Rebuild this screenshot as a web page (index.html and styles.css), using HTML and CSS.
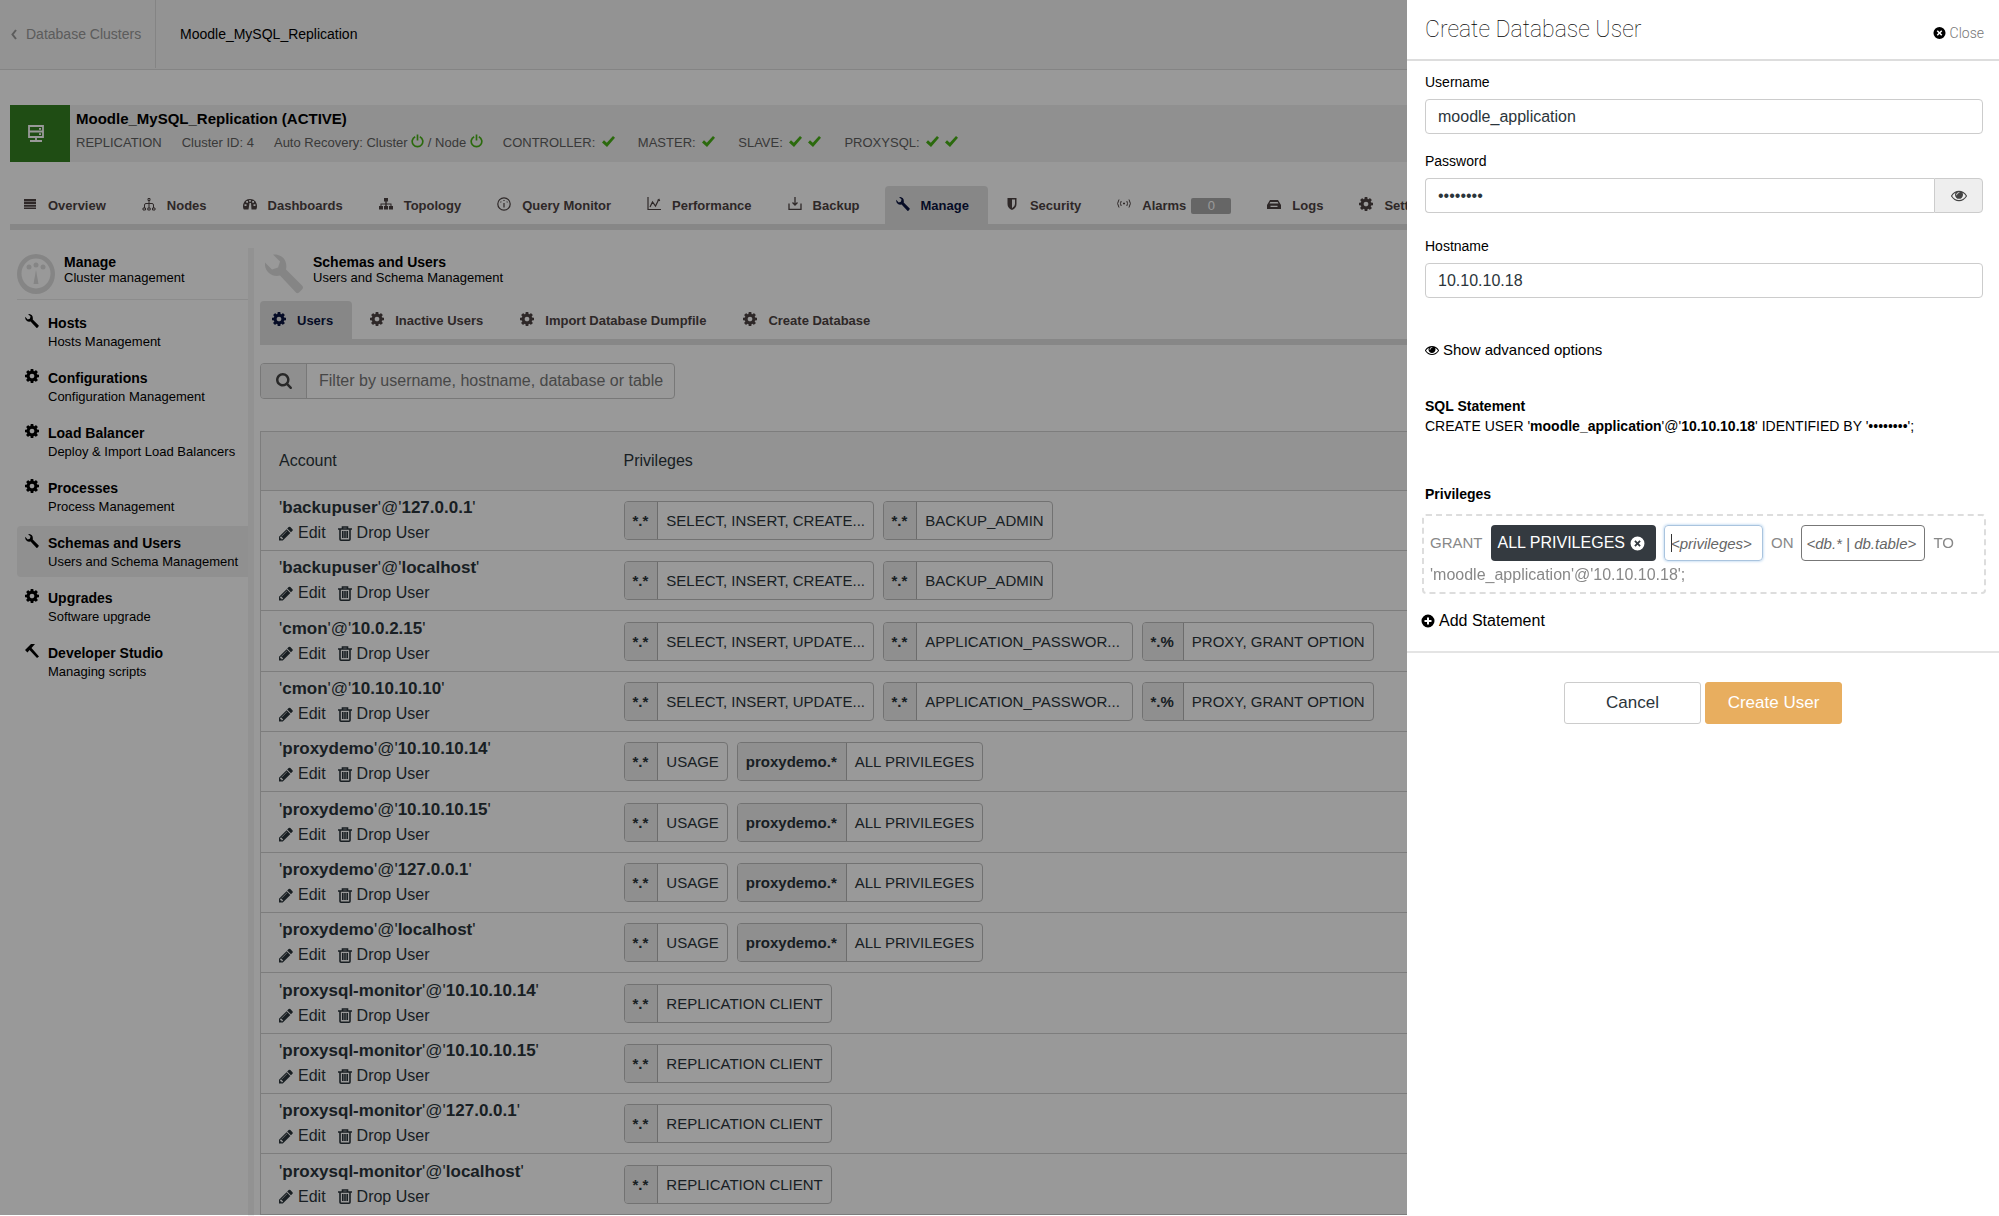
FILE: index.html
```html
<!DOCTYPE html>
<html lang="en">
<head>
<meta charset="utf-8">
<title>Moodle_MySQL_Replication</title>
<link rel="stylesheet" href="styles.css">
</head>
<body>
<svg class="sprite" aria-hidden="true">
  <symbol id="cog" viewBox="128 128 1536 1536"><path d="M1152 896q0-106-75-181t-181-75-181 75-75 181 75 181 181 75 181-75 75-181zm512-109v222q0 12-8 23t-20 13l-185 28q-19 54-39 91 35 50 107 138 10 12 10 25t-9 23q-27 37-99 108t-94 71q-12 0-26-9l-138-108q-44 23-91 38-16 136-29 186-7 28-36 28h-222q-14 0-24.5-8.5t-11.5-21.5l-28-184q-49-16-90-37l-141 107q-10 9-25 9-14 0-25-11-126-114-165-168-7-10-7-23 0-12 8-23 15-21 51-66.5t54-70.5q-27-50-41-99l-183-27q-13-2-21-12.5t-8-23.5v-222q0-12 8-23t19-13l186-28q14-46 39-92-40-57-107-138-10-12-10-24 0-10 9-23 26-36 98.5-107.5t94.5-71.5q13 0 26 10l138 107q44-23 91-38 16-136 29-186 7-28 36-28h222q14 0 24.5 8.5t11.5 21.5l28 184q49 16 90 37l142-107q9-9 24-9 13 0 25 10 129 119 165 170 7 8 7 22 0 12-8 23-15 21-51 66.5t-54 70.5q26 50 41 98l183 28q13 2 21 12.5t8 23.5z"/></symbol>
  <symbol id="wrench" viewBox="0 0 38 39"><path d="M8 0C17-1 23 6 21 15L37 31Q39 33 37 35L34 38Q32 40 30 37L15 21C7 23-1 17 0 8L7 15L13 13L15 7Z"/></symbol>
  <symbol id="hammer" viewBox="0 0 14 14"><path d="M0 6L6 0H10L6.5 4L14 12.500L12 14L4.500 6L2.500 8.500Z"/></symbol>
  <symbol id="eye" viewBox="0 384 1792 1152"><path d="M1664 960q-152-236-381-353 61 104 61 225 0 185-131.500 316.500t-316.500 131.500-316.500-131.500-131.500-316.500q0-121 61-225-229 117-381 353 133 205 333.500 326.500t434.500 121.500 434.500-121.500 333.500-326.500zm-720-384q0-20-14-34t-34-14q-125 0-214.500 89.500t-89.500 214.500q0 20 14 34t34 14 34-14 14-34q0-86 61-147t147-61q20 0 34-14t14-34zm848 384q0 34-20 69-140 230-376.500 368.500t-499.500 138.500-499.500-139-376.500-368q-20-35-20-69t20-69q140-229 376.500-368t499.500-139 499.500 139 376.500 368q20 35 20 69z"/></symbol>
  <symbol id="pencil" viewBox="128 128 1536 1536"><path d="M491 1536l91-91-235-235-91 91v107h128v128h107zm523-928q0-22-22-22-10 0-17 7l-542 542q-7 7-7 17 0 22 22 22 10 0 17-7l542-542q7-7 7-17zm-54-192l416 416-832 832h-416v-416zm683 96q0 53-37 90l-166 166-416-416 166-165q36-38 90-38 53 0 91 38l235 234q37 39 37 91z"/></symbol>
  <symbol id="trash" viewBox="0 0 14 15"><path fill="none" stroke="currentColor" stroke-width="1.600" d="M0 3H14M4.500 3V1H9.500V3M2 3V13.300Q2 14.200 3 14.200H11Q12 14.200 12 13.300V3M4.800 5V12M7 5V12M9.200 5V12"/></symbol>
  <symbol id="search" viewBox="64 128 1664 1664"><path d="M1216 832q0-185-131.500-316.500t-316.500-131.500-316.500 131.500-131.500 316.500 131.500 316.500 316.500 131.500 316.500-131.500 131.500-316.500zm512 832q0 52-38 90t-90 38q-54 0-90-38l-343-342q-179 124-399 124-143 0-273.500-55.500t-225-150-150-225-55.500-273.500 55.500-273.500 150-225 225-150 273.500-55.500 273.500 55.500 225 150 150 225 55.500 273.500q0 220-124 399l343 343q37 37 37 90z"/></symbol>
  <symbol id="check" viewBox="0 0 13 11"><path d="M0 6.500L2 4.300L4.800 6.800L11 0L13 1.800L5 11Z"/></symbol>
  <symbol id="power" viewBox="0 0 14 14"><path fill="none" stroke="currentColor" stroke-width="1.800" d="M4.500 2.300A5.700 5.700 0 1 0 9.500 2.300M7 0V6.500"/></symbol>
  <symbol id="bars" viewBox="0 0 14 12"><path d="M1 1H13V3.500H1ZM1 4H13V6H1ZM1 6.700H13V8.700H1ZM1 9.400H13V11H1Z"/></symbol>
  <symbol id="nodes" viewBox="0 0 14 14"><path fill="none" stroke="currentColor" d="M7 3.500V11M2.500 11V8Q2.500 6.500 4 6.500H10Q11.500 6.500 11.500 8V11M6 1.500H8V3.500H6ZM1 11H3.500V13H1ZM5.800 11H8.200V13H5.800ZM10.500 11H13V13H10.500Z"/></symbol>
  <symbol id="dash" viewBox="0 0 14 14"><path fill-rule="evenodd" d="M.8 12.500Q-.5 10.500 .3 7Q2 2 7 2T13.700 7Q14.500 10.500 13.200 12.500H8.500L8 6L6.500 6L5.500 12.500ZM1.500 9H3.500V7.200H1.500ZM3.200 5.800H5V4H3.200ZM6.200 4.700H7.800V3H6.200ZM9.200 5.800H11V4H9.200ZM10.500 9H12.500V7.200H10.500Z"/></symbol>
  <symbol id="sitemap" viewBox="0 0 14 14"><path d="M5 1H9V4.500H7.700V6.500H12.500V9H14V12.500H10V9H11.500V7.500H7.700V9H9V12.500H5V9H6.300V7.500H2.500V9H4V12.500H0V9H1.500V6.500H6.300V4.500H5Z"/></symbol>
  <symbol id="info" viewBox="0 0 14 14"><path fill="none" stroke="currentColor" stroke-width="1.200" d="M7 .8A6.200 6.200 0 1 0 7 13.200A6.200 6.200 0 1 0 7 .8M7 6V10.500M6.400 3.500H7.600M3.500 4.800L4.300 5.300M10.500 4.800L9.700 5.300"/></symbol>
  <symbol id="chart" viewBox="0 0 14 14"><path fill="none" stroke="currentColor" stroke-width="1.200" d="M1 0V12.500H14M3 10L5.500 5L8.500 9L11.500 3M10.500 3.500L12 2.500L12.700 4"/></symbol>
  <symbol id="backup" viewBox="0 0 14 14"><path fill="none" stroke="currentColor" stroke-width="1.300" d="M1 6.500V12.300H13V6.500M7 0V8M4.500 5.500L7 8L9.500 5.500"/></symbol>
  <symbol id="shield" viewBox="0 0 14 14"><path fill-rule="evenodd" d="M2.500 1H11.500V7Q11.500 11 7 13Q2.500 11 2.500 7ZM7 2.500V11.300Q10 9.500 10 7V2.500Z"/></symbol>
  <symbol id="signal" viewBox="0 0 14 14"><path fill="none" stroke="currentColor" d="M2 2.500Q-.8 6.500 2 10.500M4.200 4Q2.800 6.500 4.200 9M9.800 4Q11.200 6.500 9.800 9M12 2.500Q14.800 6.500 12 10.500M7 5.500V7.500M6 6.500H8"/></symbol>
  <symbol id="drive" viewBox="0 0 14 14"><path fill-rule="evenodd" d="M0 8L3 3H11L14 8V12H0ZM2.500 6.500H11.500L10.700 5H3.300ZM3.500 8.800V10H10.500V8.800Z"/></symbol>
  <symbol id="xcircle" viewBox="0 0 14 14"><path fill-rule="evenodd" d="M7 .5A6.500 6.500 0 1 1 7 13.500A6.500 6.500 0 1 1 7 .5M4 5.200L5.800 7L4 8.800L5.200 10L7 8.200L8.800 10L10 8.800L8.200 7L10 5.200L8.800 4L7 5.800L5.200 4Z"/></symbol>
  <symbol id="pluscircle" viewBox="0 0 14 14"><path fill-rule="evenodd" d="M7 .5A6.500 6.500 0 1 1 7 13.500A6.500 6.500 0 1 1 7 .5M6 3.500V6H3.500V8H6V10.500H8V8H10.500V6H8V3.500Z"/></symbol>
  <symbol id="server" viewBox="0 0 18 18"><path fill="none" stroke="currentColor" stroke-width="1.800" d="M2 1H16V12H2ZM2 6.500H16M9 12V15.500M3 16H15M12 3.800H14M12 9.200H14"/></symbol>
  <symbol id="gauge" viewBox="0 0 38 40"><path fill-rule="evenodd" d="M19 0A19 20 0 1 1 19 40A19 20 0 1 1 19 0M19 4.500A14.500 15 0 1 0 19 34.500A14.500 15 0 1 0 19 4.500"/><circle cx="12" cy="13" r="2.500"/><circle cx="19" cy="11" r="2.500"/><circle cx="26" cy="13" r="2.500"/><path d="M19 16L21.500 30H16.500Z"/></symbol>
  <symbol id="chevron" viewBox="0 0 6 11"><path fill="none" stroke="currentColor" stroke-width="2" d="M5 1L1.500 5.500L5 10"/></symbol>
</svg>

<div class="page">
  <header class="topbar">
    <a class="crumb" href="#"><svg class="ico-chev"><use href="#chevron"/></svg>Database Clusters</a>
    <span class="current">Moodle_MySQL_Replication</span>
  </header>

  <section class="cluster">
    <div class="cluster-icon"><svg><use href="#server"/></svg></div>
    <div class="cluster-text">
      <h1>Moodle_MySQL_Replication (ACTIVE)</h1>
      <div class="meta">
        <span>REPLICATION</span>
        <span>Cluster ID: 4</span>
        <span>Auto Recovery: Cluster <svg class="power"><use href="#power"/></svg> / Node <svg class="power"><use href="#power"/></svg></span>
        <span>CONTROLLER: <svg class="check"><use href="#check"/></svg></span>
        <span>MASTER: <svg class="check"><use href="#check"/></svg></span>
        <span>SLAVE: <svg class="check"><use href="#check"/></svg><svg class="check"><use href="#check"/></svg></span>
        <span>PROXYSQL: <svg class="check"><use href="#check"/></svg><svg class="check"><use href="#check"/></svg></span>
      </div>
    </div>
  </section>

  <nav class="tabs main-tabs">
    <a href="#"><svg><use href="#bars"/></svg>Overview</a>
    <a href="#"><svg><use href="#nodes"/></svg>Nodes</a>
    <a href="#"><svg><use href="#dash"/></svg>Dashboards</a>
    <a href="#"><svg><use href="#sitemap"/></svg>Topology</a>
    <a href="#"><svg><use href="#info"/></svg>Query Monitor</a>
    <a href="#"><svg><use href="#chart"/></svg>Performance</a>
    <a href="#"><svg><use href="#backup"/></svg>Backup</a>
    <a href="#" class="active"><svg><use href="#wrench"/></svg>Manage</a>
    <a href="#"><svg><use href="#shield"/></svg>Security</a>
    <a href="#"><svg><use href="#signal"/></svg>Alarms<span class="badge">0</span></a>
    <a href="#"><svg><use href="#drive"/></svg>Logs</a>
    <a href="#"><svg><use href="#cog"/></svg>Settings</a>
  </nav>

  <div class="body">
    <aside class="sidebar">
      <div class="section-head side-head"><svg><use href="#gauge"/></svg><div><h2>Manage</h2><p>Cluster management</p></div></div>
      <nav class="side-nav">
        <a href="#"><svg><use href="#wrench"/></svg><span><b>Hosts</b><small>Hosts Management</small></span></a>
        <a href="#"><svg><use href="#cog"/></svg><span><b>Configurations</b><small>Configuration Management</small></span></a>
        <a href="#"><svg><use href="#cog"/></svg><span><b>Load Balancer</b><small>Deploy &amp; Import Load Balancers</small></span></a>
        <a href="#"><svg><use href="#cog"/></svg><span><b>Processes</b><small>Process Management</small></span></a>
        <a href="#" class="active"><svg><use href="#wrench"/></svg><span><b>Schemas and Users</b><small>Users and Schema Management</small></span></a>
        <a href="#"><svg><use href="#cog"/></svg><span><b>Upgrades</b><small>Software upgrade</small></span></a>
        <a href="#"><svg><use href="#hammer"/></svg><span><b>Developer Studio</b><small>Managing scripts</small></span></a>
      </nav>
    </aside>

    <main class="content">
      <div class="section-head"><svg><use href="#wrench"/></svg><div><h2>Schemas and Users</h2><p>Users and Schema Management</p></div></div>
      <nav class="tabs sub-tabs">
        <a href="#" class="active"><svg><use href="#cog"/></svg>Users</a>
        <a href="#"><svg><use href="#cog"/></svg>Inactive Users</a>
        <a href="#"><svg><use href="#cog"/></svg>Import Database Dumpfile</a>
        <a href="#"><svg><use href="#cog"/></svg>Create Database</a>
      </nav>
      <div class="filter">
        <label for="filter" aria-label="Filter"><svg><use href="#search"/></svg></label>
        <input id="filter" type="text" placeholder="Filter by username, hostname, database or table">
      </div>

      <table class="users">
        <thead><tr><th>Account</th><th>Privileges</th></tr></thead>
        <tbody>
          <tr><td><div class="name">'<b>backupuser</b>'@'<b>127.0.0.1</b>'</div><div class="acts"><a href="#"><svg><use href="#pencil"/></svg>Edit</a><a href="#"><svg><use href="#trash"/></svg>Drop User</a></div></td>
            <td><div class="chips"><span class="chip long"><b>*.*</b><span>SELECT, INSERT, CREATE...</span></span><span class="chip"><b>*.*</b><span>BACKUP_ADMIN</span></span></div></td></tr>
          <tr><td><div class="name">'<b>backupuser</b>'@'<b>localhost</b>'</div><div class="acts"><a href="#"><svg><use href="#pencil"/></svg>Edit</a><a href="#"><svg><use href="#trash"/></svg>Drop User</a></div></td>
            <td><div class="chips"><span class="chip long"><b>*.*</b><span>SELECT, INSERT, CREATE...</span></span><span class="chip"><b>*.*</b><span>BACKUP_ADMIN</span></span></div></td></tr>
          <tr><td><div class="name">'<b>cmon</b>'@'<b>10.0.2.15</b>'</div><div class="acts"><a href="#"><svg><use href="#pencil"/></svg>Edit</a><a href="#"><svg><use href="#trash"/></svg>Drop User</a></div></td>
            <td><div class="chips"><span class="chip long"><b>*.*</b><span>SELECT, INSERT, UPDATE...</span></span><span class="chip long"><b>*.*</b><span>APPLICATION_PASSWOR...</span></span><span class="chip"><b>*.%</b><span>PROXY, GRANT OPTION</span></span></div></td></tr>
          <tr><td><div class="name">'<b>cmon</b>'@'<b>10.10.10.10</b>'</div><div class="acts"><a href="#"><svg><use href="#pencil"/></svg>Edit</a><a href="#"><svg><use href="#trash"/></svg>Drop User</a></div></td>
            <td><div class="chips"><span class="chip long"><b>*.*</b><span>SELECT, INSERT, UPDATE...</span></span><span class="chip long"><b>*.*</b><span>APPLICATION_PASSWOR...</span></span><span class="chip"><b>*.%</b><span>PROXY, GRANT OPTION</span></span></div></td></tr>
          <tr><td><div class="name">'<b>proxydemo</b>'@'<b>10.10.10.14</b>'</div><div class="acts"><a href="#"><svg><use href="#pencil"/></svg>Edit</a><a href="#"><svg><use href="#trash"/></svg>Drop User</a></div></td>
            <td><div class="chips"><span class="chip"><b>*.*</b><span>USAGE</span></span><span class="chip"><b>proxydemo.*</b><span>ALL PRIVILEGES</span></span></div></td></tr>
          <tr><td><div class="name">'<b>proxydemo</b>'@'<b>10.10.10.15</b>'</div><div class="acts"><a href="#"><svg><use href="#pencil"/></svg>Edit</a><a href="#"><svg><use href="#trash"/></svg>Drop User</a></div></td>
            <td><div class="chips"><span class="chip"><b>*.*</b><span>USAGE</span></span><span class="chip"><b>proxydemo.*</b><span>ALL PRIVILEGES</span></span></div></td></tr>
          <tr><td><div class="name">'<b>proxydemo</b>'@'<b>127.0.0.1</b>'</div><div class="acts"><a href="#"><svg><use href="#pencil"/></svg>Edit</a><a href="#"><svg><use href="#trash"/></svg>Drop User</a></div></td>
            <td><div class="chips"><span class="chip"><b>*.*</b><span>USAGE</span></span><span class="chip"><b>proxydemo.*</b><span>ALL PRIVILEGES</span></span></div></td></tr>
          <tr><td><div class="name">'<b>proxydemo</b>'@'<b>localhost</b>'</div><div class="acts"><a href="#"><svg><use href="#pencil"/></svg>Edit</a><a href="#"><svg><use href="#trash"/></svg>Drop User</a></div></td>
            <td><div class="chips"><span class="chip"><b>*.*</b><span>USAGE</span></span><span class="chip"><b>proxydemo.*</b><span>ALL PRIVILEGES</span></span></div></td></tr>
          <tr><td><div class="name">'<b>proxysql-monitor</b>'@'<b>10.10.10.14</b>'</div><div class="acts"><a href="#"><svg><use href="#pencil"/></svg>Edit</a><a href="#"><svg><use href="#trash"/></svg>Drop User</a></div></td>
            <td><div class="chips"><span class="chip"><b>*.*</b><span>REPLICATION CLIENT</span></span></div></td></tr>
          <tr><td><div class="name">'<b>proxysql-monitor</b>'@'<b>10.10.10.15</b>'</div><div class="acts"><a href="#"><svg><use href="#pencil"/></svg>Edit</a><a href="#"><svg><use href="#trash"/></svg>Drop User</a></div></td>
            <td><div class="chips"><span class="chip"><b>*.*</b><span>REPLICATION CLIENT</span></span></div></td></tr>
          <tr><td><div class="name">'<b>proxysql-monitor</b>'@'<b>127.0.0.1</b>'</div><div class="acts"><a href="#"><svg><use href="#pencil"/></svg>Edit</a><a href="#"><svg><use href="#trash"/></svg>Drop User</a></div></td>
            <td><div class="chips"><span class="chip"><b>*.*</b><span>REPLICATION CLIENT</span></span></div></td></tr>
          <tr><td><div class="name">'<b>proxysql-monitor</b>'@'<b>localhost</b>'</div><div class="acts"><a href="#"><svg><use href="#pencil"/></svg>Edit</a><a href="#"><svg><use href="#trash"/></svg>Drop User</a></div></td>
            <td><div class="chips"><span class="chip"><b>*.*</b><span>REPLICATION CLIENT</span></span></div></td></tr>
        </tbody>
      </table>
    </main>
  </div>
</div>

<div class="overlay"></div>

<form class="drawer">
  <header class="drawer-head">
    <h2>Create Database User</h2>
    <button type="button" class="close"><svg><use href="#xcircle"/></svg>Close</button>
  </header>
  <div class="fields">
    <label for="username">Username</label>
    <input id="username" type="text" value="moodle_application">
    <label for="password">Password</label>
    <div class="password">
      <input id="password" type="password" value="password">
      <button type="button" aria-label="Show password"><svg><use href="#eye"/></svg></button>
    </div>
    <label for="hostname">Hostname</label>
    <input id="hostname" type="text" value="10.10.10.18">
    <a class="advanced" href="#"><svg><use href="#eye"/></svg>Show advanced options</a>
    <h3>SQL Statement</h3>
    <p class="sql">CREATE USER '<b>moodle_application</b>'@'<b>10.10.10.18</b>' IDENTIFIED BY '••••••••';</p>
    <h3>Privileges</h3>
  </div>
  <div class="statement">
    <span>GRANT</span>
    <button type="button" class="granted">ALL PRIVILEGES<svg><use href="#xcircle"/></svg></button>
    <input class="privs" type="text" placeholder="&lt;privileges&gt;" aria-label="Privileges" autofocus>
    <span>ON</span>
    <input class="target" type="text" placeholder="&lt;db.* | db.table&gt;" aria-label="Database or table">
    <span>TO</span>
    <span class="grantee">'moodle_application'@'10.10.10.18';</span>
  </div>
  <button type="button" class="add"><svg><use href="#pluscircle"/></svg>Add Statement</button>
  <footer class="drawer-foot">
    <button type="button">Cancel</button>
    <button type="submit" class="primary">Create User</button>
  </footer>
</form>
</body>
</html>
```
FILE: styles.css
```css
* { box-sizing: border-box; }
html, body { height: 100%; }
body {
  margin: 0;
  overflow: hidden;
  background: #fff;
  color: #000;
  font: 16px/20px "Liberation Sans", Arial, sans-serif;
}
h1, h2, h3, p { margin: 0; }
a { color: inherit; text-decoration: none; }
button, input { font: inherit; color: inherit; }
button { cursor: pointer; }
svg { fill: currentColor; flex: none; }
.sprite { position: absolute; width: 0; height: 0; }

.page { min-height: 100%; display: flex; flex-direction: column; }

.topbar {
  display: flex;
  height: 70px;
  padding-bottom: 1px;
  background: #f5f5f5;
  border-bottom: 1px solid #dcdcdc;
  font-size: 14px;
}
.crumb {
  display: flex;
  align-items: center;
  gap: 9px;
  width: 156px;
  padding-left: 11px;
  border-right: 1px solid #dcdcdc;
  color: #999;
  white-space: nowrap;
}
.ico-chev { width: 6px; height: 11px; }
.current { align-self: center; padding-left: 24px; }

.cluster {
  display: flex;
  margin: 35px 10px 0;
  height: 57px;
  background: #f0f0f0;
}
.cluster-icon {
  width: 60px;
  display: grid;
  place-items: center;
  padding-right: 8px;
  background: #358022;
  color: #fff;
}
.cluster-icon svg { width: 18px; height: 18px; }
.cluster-text { padding: 4px 6px; white-space: nowrap; }
.cluster-text h1 { font-size: 15px; line-height: 20px; }
.meta {
  display: flex;
  gap: 20px;
  margin-top: 4px;
  color: #606060;
  font-size: 13px;
}
.power { width: 13px; height: 14px; color: #49b117; vertical-align: -1px; }
.check { width: 13px; height: 11px; margin-left: 3px; margin-right: 3px; color: #49b117; }

.tabs {
  display: flex;
  gap: 6px;
  border-bottom: 6px solid #e2e2e2;
  color: #4e4444;
  font-size: 13px;
  font-weight: bold;
  white-space: nowrap;
}
.main-tabs { margin: 24px 10px 0; padding-left: 2px; }
.tabs a {
  display: flex;
  align-items: center;
  height: 38px;
  padding: 2px 19px 0 11px;
  border-radius: 4px 4px 0 0;
}
.tabs svg { width: 14px; height: 14px; margin: 0 11px 4px 0; }
.sub-tabs a { padding-left: 12px; }
.tabs .active { background: #e2e2e2; color: #0a1440; }
.badge {
  width: 40px;
  height: 16px;
  margin-left: 5px;
  border-radius: 2px;
  background: #aaa;
  color: #fff;
  font-weight: normal;
  line-height: 16px;
  text-align: center;
}

.body { flex: 1; display: flex; padding: 18px 10px 0 17px; }
.sidebar { flex: none; width: 237px; border-right: 6px solid #f3f3f3; }
.content { flex: 1; padding-left: 6px; min-width: 0; }
.section-head { display: flex; gap: 10px; height: 53px; padding: 5px 0 0 5px; }
.side-head { gap: 9px; padding-left: 0; height: 52px; border-bottom: 1px solid #eaeaea; }
.section-head > svg { width: 38px; height: 40px; margin-top: 1px; color: #dedede; }
.section-head h2 { font-size: 14px; line-height: 18px; }
.section-head p { font-size: 13px; line-height: 13px; }

.side-nav { display: grid; gap: 4px; padding-top: 6px; white-space: nowrap; }
.side-nav a { display: flex; gap: 9px; height: 51px; padding: 7px 0 0 8px; border-radius: 4px 0 0 4px; }
.side-nav svg { width: 14px; height: 14px; margin-top: 1px; }
.side-nav b { display: block; font-size: 14px; line-height: 20px; }
.side-nav small { display: block; font-size: 13px; line-height: 18px; }
.side-nav .active { background: #f0f0f0; }

.filter {
  display: flex;
  width: 415px;
  height: 36px;
  margin-top: 18px;
  border: 1px solid #c8c8c8;
  border-radius: 4px;
  overflow: hidden;
}
.filter label {
  width: 46px;
  display: grid;
  place-items: center;
  background: #eee;
  border-right: 1px solid #c8c8c8;
  color: #444;
}
.filter label svg { width: 16px; height: 16px; }
.filter input { flex: 1; min-width: 0; border: 0; padding: 0 4px 0 12px; background: none; }
.filter input::placeholder { color: #777; opacity: 1; }

.users {
  width: 100%;
  margin-top: 32px;
  border-collapse: collapse;
  border: 1px solid #d0d0d0;
  color: #2b353b;
  white-space: nowrap;
}
.users tr { height: 60px; border-top: 1px solid #d0d0d0; }
.users thead tr { height: 59px; }
.users tbody tr:nth-child(3n) { height: 61px; }
.users th { background: #f5f5f5; font-weight: normal; text-align: left; }
.users th, .users td { padding: 0 18px; }
.users th:first-child, .users td:first-child { width: 346px; }
.users th:last-child, .users td:last-child { padding-left: 17px; }
.name { font-size: 17px; }
.acts { display: flex; gap: 12px; margin-top: 5px; }
.acts a { display: flex; align-items: center; gap: 5px; }
.acts svg { width: 14px; height: 15px; }

.chips { display: flex; gap: 9px; font-size: 15px; }
.chip {
  display: flex;
  height: 39px;
  line-height: 37px;
  border: 1px solid #bebebe;
  border-radius: 4px;
}
.chip b { padding: 0 9px 0 8px; background: #eee; border-right: 1px solid #b4b4b4; border-radius: 3px 0 0 3px; }
.chip span { padding: 0 8px; }
.long { width: 250px; }

.overlay { position: fixed; inset: 0 0 1px; background: rgba(0, 0, 0, .4); }

.drawer {
  position: fixed;
  inset: 0 0 0 auto;
  width: 592px;
  max-width: 100%;
  background: #fff;
}
.drawer-head {
  display: flex;
  justify-content: space-between;
  align-items: center;
  height: 61px;
  padding: 0 15px 0 18px;
  border-bottom: 2px solid #ddd;
}
.drawer-head h2 { color: #000; font: 100 23px/28px Roboto, sans-serif; }
.close {
  display: flex;
  align-items: center;
  gap: 4px;
  margin-top: 6px;
  padding: 0;
  border: 0;
  background: none;
  color: #777;
  font: 300 14px/20px Roboto, sans-serif;
}
.close svg { width: 13px; height: 14px; color: #000; }

.fields { padding: 11px 16px 0 18px; }
.fields label, .fields h3 { display: block; font-size: 14px; line-height: 20px; }
.fields input {
  display: block;
  width: 100%;
  height: 35px;
  padding: 0 12px;
  border: 1px solid #ccc;
  border-radius: 4px;
  background: #fff;
  color: #2b353b;
}
.fields > input, .password { margin: 7px 0 17px; }
.password { display: flex; margin-bottom: 23px; }
.password input { flex: 1; min-width: 0; border-right: 0; border-radius: 4px 0 0 4px; }
.password button {
  width: 49px;
  display: grid;
  place-items: center;
  padding: 0;
  border: 1px solid #ccc;
  border-radius: 0 4px 4px 0;
  background: #eee;
  color: #444;
}
.password button svg { width: 16px; height: 12px; }
.advanced { display: flex; align-items: center; gap: 4px; margin: 42px 0 36px; font-size: 15px; }
.advanced svg { width: 14px; height: 11px; }
.sql { margin-bottom: 48px; font-size: 14px; line-height: 20px; white-space: nowrap; }

.statement {
  display: flex;
  flex-wrap: wrap;
  align-items: center;
  column-gap: 8px;
  margin: 10px 13px 0 15px;
  padding: 9px 8px 7px 6px;
  border: 2px dashed #ddd;
  border-radius: 4px;
  color: #888;
  font-size: 15px;
}
.granted {
  display: flex;
  align-items: center;
  gap: 5px;
  height: 36px;
  padding: 0 11px 0 7px;
  border: 0;
  border-radius: 4px;
  background: #343a40;
  color: #fff;
  font-size: 16px;
}
.granted svg { width: 15px; height: 15px; }
.statement input {
  height: 36px;
  padding: 0 4px;
  border: 1px solid #777;
  border-radius: 4px;
  outline: 0;
  color: #555;
}
.statement input::placeholder { color: #666; opacity: 1; font-style: italic; }
.statement .privs {
  width: 99px;
  padding: 0 6px;
  border-color: #aac4de;
  background: linear-gradient(#333, #333) 6px center / 1px 18px no-repeat;
  box-shadow: 0 0 3px #9ec5ea;
  caret-color: transparent;
}
.statement .target { width: 124px; }
.grantee { flex-basis: 100%; margin-top: 4px; font-size: 16px; }
.add {
  display: flex;
  align-items: center;
  gap: 4px;
  margin: 17px 0 0 14px;
  padding: 0;
  border: 0;
  background: none;
}
.add svg { width: 14px; height: 14px; }
.drawer-foot {
  display: flex;
  justify-content: center;
  gap: 4px;
  margin-top: 20px;
  padding-top: 29px;
  border-top: 2px solid #e4e4e4;
}
.drawer-foot button {
  width: 137px;
  height: 42px;
  border: 1px solid #ccc;
  border-radius: 3px;
  background: #fff;
  color: #2b353b;
  font-size: 17px;
}
.drawer-foot .primary { border-color: #e8ae5f; background: #e8ae5f; color: #fff; }
```
